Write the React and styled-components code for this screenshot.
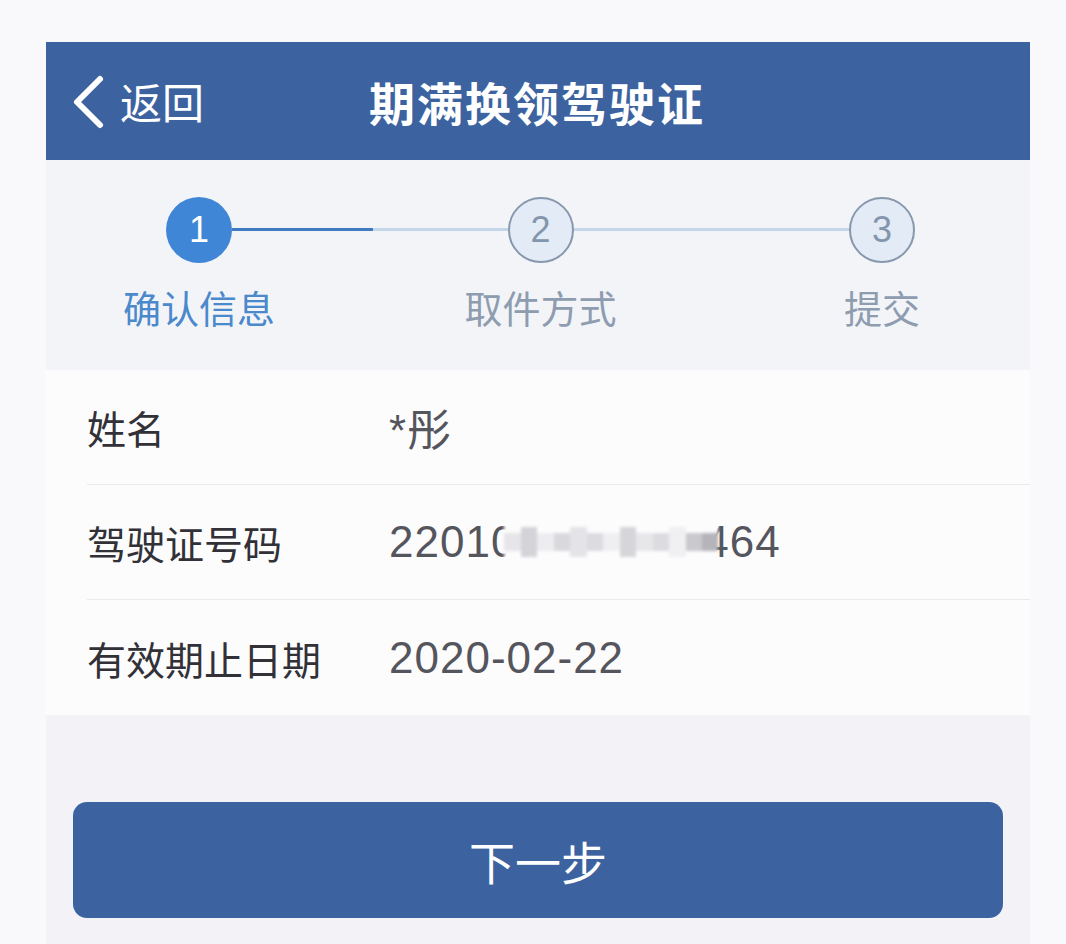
import React from "react";
import styled, { createGlobalStyle } from "styled-components";

const GlobalStyle = createGlobalStyle`
  html, body {
    margin: 0;
    padding: 0;
    background: #f9f9fb;
  }
  body {
    font-family: "Liberation Sans", "Noto Sans CJK SC", sans-serif;
  }
`;

const steps = [
  { id: 1, label: "确认信息", active: true },
  { id: 2, label: "取件方式" },
  { id: 3, label: "提交" },
];

const rows = [
  { label: "姓名", value: "*彤" },
  { label: "驾驶证号码", masked: true },
  { label: "有效期止日期", value: "2020-02-22" },
];

const mosaicCells = [
  "#e6e6e9", "#d4d4d8", "#ededf0", "#d9d9dd", "#e4e4e8", "#dcdce0",
  "#efeff1", "#d6d6da", "#e7e7ea", "#dcdce0", "#f0f0f2", "#c9c9ce",
  "#b4b4ba",
];

const App = () => {
  return (
    <>
      <GlobalStyle />
      <Page>
        <Panel>
          <Header>
            <Back>
              <svg width="36" height="56" viewBox="0 0 36 56">
                <path
                  d="M30 5 L7 28 L30 51"
                  fill="none"
                  stroke="#fff"
                  strokeWidth="6"
                  strokeLinecap="round"
                  strokeLinejoin="round"
                />
              </svg>
              <span>返回</span>
            </Back>
            <Title>期满换领驾驶证</Title>
            <div />
          </Header>

          <StepBar>
            {steps.map((step, idx) => (
              <React.Fragment key={step.id}>
                {idx > 0 && <Connector progress={idx === 1 ? 51 : 0} />}
                <StepNode>
                  <Circle active={step.active}>{step.id}</Circle>
                  <StepLabel active={step.active}>{step.label}</StepLabel>
                </StepNode>
              </React.Fragment>
            ))}
          </StepBar>

          <List>
            {rows.map((row) => (
              <Row key={row.label}>
                <Label>{row.label}</Label>
                <Value>
                  {row.masked ? (
                    <>
                      22010
                      <Mosaic>
                        {mosaicCells.map((c, i) => (
                          <Cell key={i} shade={c} tall={i % 3 === 1} />
                        ))}
                      </Mosaic>
                      464
                    </>
                  ) : (
                    row.value
                  )}
                </Value>
              </Row>
            ))}
          </List>

          <Footer>
            <NextButton>下一步</NextButton>
          </Footer>
        </Panel>
      </Page>
    </>
  );
};

export default App;

const Page = styled.div`
  padding: 42px 36px 0 46px;
  min-height: 944px;
  box-sizing: border-box;
`;

const Panel = styled.div`
  width: 984px;
  display: flex;
  flex-direction: column;
`;

const Header = styled.div`
  height: 118px;
  background: #3c63a0;
  display: grid;
  grid-template-columns: 1fr auto 1fr;
  align-items: center;
  padding: 0 24px;
  color: #fff;
`;

const Back = styled.div`
  display: flex;
  align-items: center;
  gap: 14px;
  font-family: "Noto Sans CJK SC", sans-serif;
  font-size: 42px;
  line-height: 1;

  svg {
    display: block;
    margin-top: 2px;
  }
`;

const Title = styled.div`
  font-family: "Noto Sans CJK SC", sans-serif;
  font-size: 46px;
  font-weight: 600;
  letter-spacing: 2px;
  line-height: 1;
  margin-left: -2px;
`;

const StepBar = styled.div`
  height: 210px;
  box-sizing: border-box;
  background: #f3f4f8;
  display: flex;
  align-items: flex-start;
  padding: 37px 115px 0 120px;
`;

const StepNode = styled.div`
  width: 66px;
  display: flex;
  flex-direction: column;
  align-items: center;
`;

const Circle = styled.div`
  width: 66px;
  height: 66px;
  box-sizing: border-box;
  border-radius: 50%;
  display: flex;
  align-items: center;
  justify-content: center;
  font-family: "Liberation Sans", sans-serif;
  font-size: 36px;
  background: ${(p) => (p.active ? "#3f86d6" : "#e3ebf6")};
  border: ${(p) => (p.active ? "none" : "2px solid #8798ae")};
  color: ${(p) => (p.active ? "#fff" : "#8496ad")};
`;

const StepLabel = styled.div`
  margin-top: 21px;
  white-space: nowrap;
  font-family: "Noto Sans CJK SC", sans-serif;
  font-size: 38px;
  line-height: 46px;
  color: ${(p) => (p.active ? "#4a89cb" : "#8e9cb0")};
`;

const Connector = styled.div`
  flex: 1;
  height: 3px;
  margin-top: 31px;
  background: ${(p) =>
    p.progress
      ? `linear-gradient(to right, #3f7bc2 ${p.progress}%, #c3d6ea ${p.progress}%)`
      : "#c3d6ea"};
`;

const List = styled.div`
  background: #fcfcfd;
  padding-left: 41px;
`;

const Row = styled.div`
  height: 115px;
  display: flex;
  align-items: center;
  border-bottom: 1px solid #ebebee;
  box-sizing: border-box;

  &:last-child {
    border-bottom: none;
  }
`;

const Label = styled.div`
  width: 302px;
  font-family: "Noto Sans CJK SC", sans-serif;
  font-size: 39px;
  color: #313137;
`;

const Value = styled.div`
  display: flex;
  align-items: center;
  font-family: "Liberation Sans", "Noto Sans CJK SC", sans-serif;
  font-size: 44px;
  letter-spacing: 1px;
  color: #55555d;
`;

const Mosaic = styled.span`
  position: relative;
  z-index: 1;
  display: inline-flex;
  align-items: center;
  width: 214px;
  height: 42px;
  margin: 0 -14px 0 -12px;
  background: #fcfcfd;
  filter: blur(1.5px);
`;

const Cell = styled.span`
  flex: 1;
  height: ${(p) => (p.tall ? "30px" : "18px")};
  background: ${(p) => p.shade};
`;

const Footer = styled.div`
  background: #f3f3f7;
  padding: 87px 27px 26px 27px;
`;

const NextButton = styled.button`
  display: block;
  width: 930px;
  height: 116px;
  border: none;
  border-radius: 14px;
  background: #3c63a0;
  color: #fff;
  font-family: "Noto Sans CJK SC", sans-serif;
  font-size: 46px;
  cursor: pointer;
`;
